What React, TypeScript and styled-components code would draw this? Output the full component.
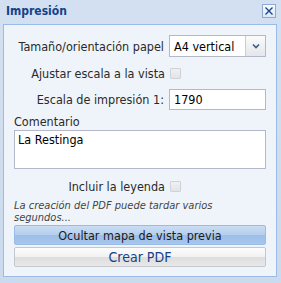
import React from "react";
import styled, { createGlobalStyle } from "styled-components";

const Global = createGlobalStyle`
  html, body { margin: 0; padding: 0; }
  body {
    width: 281px; height: 283px; overflow: hidden;
    background: #cfdcee;
    font-family: "DejaVu Sans Condensed", "Liberation Sans", sans-serif;
  }
`;

const Window = styled.div`
  width: 281px;
  height: 283px;
  box-sizing: border-box;
  background: linear-gradient(#d3e0f1, #cbdaed);
  padding: 0 4px 6px 3px;
  display: flex;
  flex-direction: column;
`;

const Header = styled.div`
  height: 24px;
  display: flex;
  align-items: center;
  justify-content: space-between;
  padding: 0 1px 0 3px;
`;

const Title = styled.div`
  font-weight: bold;
  font-size: 12px;
  color: #15428b;
  margin-top: -2px;
`;

const Close = styled.div`
  width: 14px;
  height: 14px;
  box-sizing: border-box;
  border: 1px solid #8eaad3;
  background: linear-gradient(#f7fafd, #dde7f4);
  display: flex;
  align-items: center;
  justify-content: center;
  margin-top: -2px;
`;

const Body = styled.div`
  flex: 1;
  border: 1px solid #99bbe8;
  background: #eff4fa;
  padding: 10px 10px 0 10px;
  display: flex;
  flex-direction: column;
`;

const Row = styled.div<{ $mt?: number }>`
  display: flex;
  align-items: center;
  justify-content: flex-end;
  gap: 5px;
  margin-top: ${(p) => p.$mt ?? 0}px;
`;

const Label = styled.span`
  font-size: 12.5px;
  color: #2a2a2a;
`;

const Select = styled.div`
  width: 97px;
  height: 22px;
  box-sizing: border-box;
  border: 1px solid #b5b8c8;
  background: #fff;
  display: flex;
  align-items: center;
  font-size: 12.5px;
  color: #000;
`;

const SelectText = styled.span`
  flex: 1;
  padding-left: 4px;
`;

const Trigger = styled.div`
  width: 19px;
  height: 20px;
  border-left: 1px solid #c8ccd6;
  background: linear-gradient(#fbfbfb, #e3e6ea);
  display: flex;
  align-items: center;
  justify-content: center;
`;

const Check = styled.div`
  width: 11px;
  height: 11px;
  box-sizing: border-box;
  border: 1px solid #cfd3d8;
  border-radius: 1px;
  background: linear-gradient(#eef0f2, #e2e5e8);
  margin-right: 85px;
`;

const TextInput = styled.div`
  width: 97px;
  height: 21px;
  box-sizing: border-box;
  border: 1px solid #b5b8c8;
  background: #fff;
  font-size: 12.5px;
  color: #000;
  padding-left: 4px;
  display: flex;
  align-items: center;
`;

const FieldLabel = styled.div`
  font-size: 12.5px;
  color: #2a2a2a;
  margin-top: 5px;
  line-height: 14px;
`;

const TextArea = styled.div`
  height: 39px;
  margin-top: 1px;
  box-sizing: border-box;
  border: 1px solid #b5b8c8;
  background: #fff;
  font-size: 12.5px;
  color: #000;
  padding: 2px 3px;
  line-height: 14px;
`;

const Note = styled.div`
  font-style: italic;
  font-size: 11px;
  color: #444;
  line-height: 12px;
  margin-top: 6px;
`;

const Button = styled.div<{ $pressed?: boolean }>`
  height: 20px;
  box-sizing: border-box;
  border: 1px solid ${(p) => (p.$pressed ? "#99bbe8" : "#c4c7cc")};
  border-radius: 2px;
  background: ${(p) =>
    p.$pressed
      ? "linear-gradient(#c9dcf3 0%, #b6cfee 50%, #9cbee8 52%, #a9c6ec 100%)"
      : "linear-gradient(#fdfdfd 0%, #f1f1f1 50%, #dedede 52%, #e8e8e8 100%)"};
  display: flex;
  align-items: center;
  justify-content: center;
  font-size: ${(p) => (p.$pressed ? 12.5 : 14)}px;
  color: ${(p) => (p.$pressed ? "#1b1b1b" : "#15428b")};
  margin-top: ${(p) => (p.$pressed ? 1 : 2)}px;
`;

export default function App() {
  return (
    <>
      <Global />
      <Window>
        <Header>
          <Title>Impresión</Title>
          <Close>
            <svg width="10" height="10" viewBox="0 0 10 10">
              <path d="M1.5 1.5 L8.5 8.5 M8.5 1.5 L1.5 8.5" stroke="#15428b" strokeWidth="1.3" />
            </svg>
          </Close>
        </Header>
        <Body>
          <Row>
            <Label>Tamaño/orientación papel</Label>
            <Select>
              <SelectText>A4 vertical</SelectText>
              <Trigger>
                <svg width="8" height="6" viewBox="0 0 8 6">
                  <path d="M1 1.5 L4 4.5 L7 1.5" stroke="#3d5a8a" strokeWidth="1.6" fill="none" />
                </svg>
              </Trigger>
            </Select>
          </Row>
          <Row $mt={9}>
            <Label>Ajustar escala a la vista</Label>
            <Check />
          </Row>
          <Row $mt={8}>
            <Label>Escala de impresión 1:</Label>
            <TextInput>1790</TextInput>
          </Row>
          <FieldLabel>Comentario</FieldLabel>
          <TextArea>La Restinga</TextArea>
          <Row $mt={10}>
            <Label>Incluir la leyenda</Label>
            <Check />
          </Row>
          <Note>
            La creación del PDF puede tardar varios
            <br />
            segundos...
          </Note>
          <Button $pressed>Ocultar mapa de vista previa</Button>
          <Button>Crear PDF</Button>
        </Body>
      </Window>
    </>
  );
}
